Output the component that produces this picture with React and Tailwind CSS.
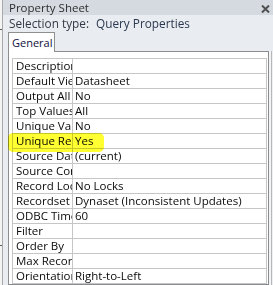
import React from "react";

const rows = [
  ["Description", ""],
  ["Default View", "Datasheet"],
  ["Output All Fields", "No"],
  ["Top Values", "All"],
  ["Unique Values", "No"],
  ["Unique Records", "Yes"],
  ["Source Database", "(current)"],
  ["Source Connect Str", ""],
  ["Record Locks", "No Locks"],
  ["Recordset Type", "Dynaset (Inconsistent Updates)"],
  ["ODBC Timeout", "60"],
  ["Filter", ""],
  ["Order By", ""],
  ["Max Records", ""],
  ["Orientation", "Right-to-Left"],
];

export default function App() {
  return (
    <div className="relative w-[273px] h-[285px] overflow-hidden flex bg-[#e9ecf0] text-[11.5px] font-['Open_Sans',sans-serif] leading-none">
      {/* left strip from neighbouring window */}
      <div className="relative w-[2px] h-full bg-[#f4f4f4]">
        <div className="absolute left-0 top-[29px] w-[2px] h-px bg-[#5a5a5a]" />
        <div className="absolute left-0 top-[245px] w-[2px] h-px bg-[#5a5a5a]" />
      </div>
      <div className="w-px h-full bg-[#a9a9a9]" />
      <div className="flex-1 flex flex-col min-w-0">
        {/* title */}
        <div className="h-[16px] bg-[#d5dae1] flex items-center justify-between pl-[6px] pr-[3px]">
          <span className="text-[#2e2e2e] text-[11.5px]">Property Sheet</span>
          <svg width="9" height="8" viewBox="0 0 9 8" className="mt-[2px]">
            <path d="M1 0.5 L8 7.5 M8 0.5 L1 7.5" stroke="#505050" strokeWidth="2" />
          </svg>
        </div>
        {/* selection type */}
        <div className="h-[18px] flex items-center pl-[6px] text-[#333a45] text-[11.8px]">
          <span>Selection type:</span>
          <span className="ml-[7px] text-[#2a3850]">Query Properties</span>
        </div>
        {/* tab row */}
        <div className="h-[19px] flex items-end pl-[5px]">
          <div className="h-[20px] w-[47px] border border-b-0 border-[#8e8f8f] bg-white flex items-center pl-[3px] text-[#101040] text-[11px] relative top-px z-10 whitespace-nowrap">
            General
          </div>
        </div>
        {/* content */}
        <div className="flex-1 flex pl-[5px]">
          <div className="flex-1 border border-[#8a8c90] bg-white pl-[3px] pt-[6px] pr-px">
            <div className="border-t border-l border-[#c6c6c6]">
              {rows.map(([label, value]) => (
                <div key={label} className="flex h-[15px] border-b border-[#c6c6c6] text-[#0a0a0a]">
                  <div className="w-[60px] shrink-0 border-r border-[#c6c6c6] pl-[3px] overflow-hidden whitespace-nowrap flex items-center">
                    {label}
                  </div>
                  <div className="flex-1 border-r border-[#c6c6c6] pl-[2px] whitespace-nowrap overflow-hidden flex items-center">
                    {value}
                  </div>
                </div>
              ))}
            </div>
          </div>
          <div className="w-[4px] flex">
            <div className="w-[2px] bg-[#f3f4f6]" />
            <div className="w-px bg-[#b5b7ba]" />
            <div className="w-px bg-[#eef0f2]" />
          </div>
        </div>
      </div>
      {/* highlighter mark */}
      <div className="absolute left-[8px] top-[133px] w-[96px] h-[19px] rounded-[5px] bg-[#ffff1a] opacity-90 mix-blend-multiply" />
    </div>
  );
}
